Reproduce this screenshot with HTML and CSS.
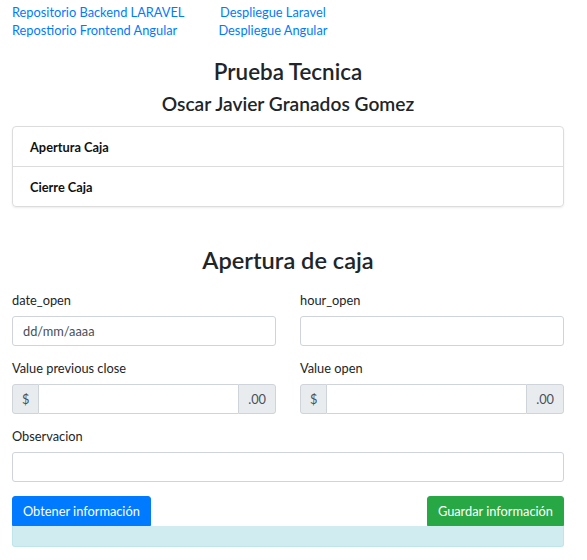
FILE: index.html
```html
<!DOCTYPE html>
<html lang="es">
<head>
<meta charset="utf-8">
<title>Prueba Tecnica</title>
<link rel="stylesheet" href="styles.css">
</head>
<body>
<div class="page">
  <div class="links">
    <a href="#">Repositorio Backend LARAVEL</a>
    <a href="#" class="center">Despliegue Laravel</a>
    <a href="#">Repostiorio Frontend Angular</a>
    <a href="#" class="center">Despliegue Angular</a>
  </div>
  <h3 class="title">Prueba Tecnica</h3>
  <h4 class="subtitle">Oscar Javier Granados Gomez</h4>
  <div class="card">
    <div class="card-item">Apertura Caja</div>
    <div class="card-item">Cierre Caja</div>
  </div>
  <h2 class="section-title">Apertura de caja</h2>
  <form class="form">
    <div class="row">
      <div class="group">
        <label class="label">date_open</label>
        <input class="control" type="text" placeholder="dd/mm/aaaa">
      </div>
      <div class="group">
        <label class="label">hour_open</label>
        <input class="control" type="text">
      </div>
    </div>
    <div class="row">
      <div class="group">
        <label class="label">Value previous close</label>
        <div class="input-group">
          <span class="addon">$</span>
          <input class="control inner" type="text">
          <span class="addon">.00</span>
        </div>
      </div>
      <div class="group">
        <label class="label">Value open</label>
        <div class="input-group">
          <span class="addon">$</span>
          <input class="control inner" type="text">
          <span class="addon">.00</span>
        </div>
      </div>
    </div>
    <div class="group full">
      <label class="label">Observacion</label>
      <input class="control" type="text">
    </div>
    <div class="actions">
      <button type="button" class="btn btn-primary">Obtener información</button>
      <button type="button" class="btn btn-success">Guardar información</button>
    </div>
    <div class="alert"></div>
  </form>
</div>
</body>
</html>
```
FILE: styles.css
```css
* { box-sizing: border-box; }
body {
  margin: 0;
  font-family: Lato, "Open Sans", sans-serif;
  font-size: 12.8px;
  line-height: 1.5;
  color: #212529;
  background: #fff;
}
.page {
  padding: 0 23px 0 12px;
}
.links {
  display: grid;
  grid-template-columns: max-content max-content;
  column-gap: 34px;
  padding-top: 3px;
  line-height: 18px;
}
.links a {
  color: #007bff;
  text-decoration: none;
}
.links .center { justify-self: center; }
.title {
  margin: 20px 0 6px;
  text-align: center;
  font-size: 22.4px;
  font-weight: 600;
  line-height: 1.2;
}
.subtitle {
  margin: 0 0 11px;
  text-align: center;
  font-size: 19.2px;
  font-weight: 600;
  line-height: 1.2;
}
.card {
  border: 1px solid #dcdcdc;
  border-radius: 4px;
  box-shadow: 0 1px 2px rgba(0,0,0,0.08);
}
.card-item {
  padding: 11px 17px 9px;
  line-height: 19px;
  font-weight: 700;
  color: #111;
}
.card-item + .card-item { border-top: 1px solid #dcdcdc; }
.section-title {
  margin: 39px 0 17px;
  text-align: center;
  font-size: 23.6px;
  font-weight: 600;
  line-height: 1.2;
}
.row {
  display: grid;
  grid-template-columns: 1fr 1fr;
  column-gap: 24px;
}
.group { margin-bottom: 13px; }
.label {
  display: block;
  line-height: 19px;
  margin-bottom: 6px;
}
.control {
  display: block;
  width: 100%;
  height: 30px;
  padding: 0 10px;
  font: inherit;
  color: #495057;
  border: 1px solid #ced4da;
  border-radius: 3px;
  background: #fff;
}
.control::placeholder { color: #495057; opacity: 1; }
.input-group {
  display: flex;
  height: 30px;
}
.addon {
  display: flex;
  align-items: center;
  padding: 0 9px;
  color: #495057;
  background: #e9ecef;
  border: 1px solid #ced4da;
}
.addon:first-child { border-radius: 3px 0 0 3px; }
.addon:last-child { border-radius: 0 3px 3px 0; }
.control.inner {
  flex: 1;
  border-radius: 0;
  border-left: 0;
  border-right: 0;
}
.actions {
  display: flex;
  justify-content: space-between;
  margin-top: 14px;
}
.btn {
  height: 30px;
  padding: 0 10px;
  font: inherit;
  color: #fff;
  border: 1px solid transparent;
  border-radius: 3px 3px 0 0;
}
.btn-primary { background: #007bff; border-color: #007bff; }
.btn-success { background: #28a745; border-color: #28a745; }
.alert {
  height: 21px;
  background: #d1ecf1;
  border: 1px solid #bee5eb;
  border-top: 0;
  border-radius: 0 0 3px 3px;
}
```
